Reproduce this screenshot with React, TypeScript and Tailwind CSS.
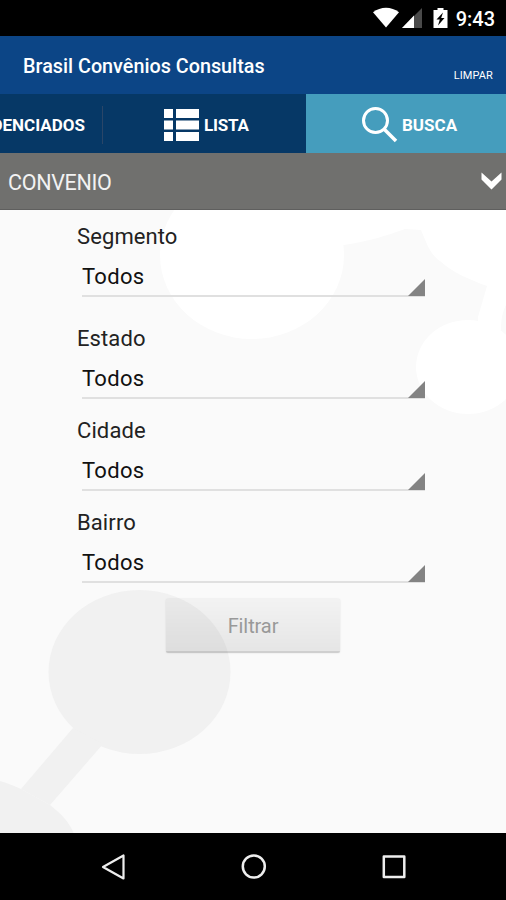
import { useState } from "react";

const fields = [
    { label: "Segmento", className: "mb-7" },
    { label: "Estado", className: "mb-[18px]" },
    { label: "Cidade", className: "mb-[18px]" },
    { label: "Bairro", className: "mb-4" },
];

function StatusBar() {
    return (
        <div className="flex h-9 shrink-0 items-center justify-end bg-black pr-[11px] text-white">
            <svg className="mr-[2px]" width="26" height="22" viewBox="0 0 26 22" fill="#fff">
                <path d="M0 5.200C7.500-.8 18.500-.8 26 5.200L13 20.500z" />
            </svg>
            <svg className="mr-[11px]" width="21" height="22" viewBox="0 0 21 22">
                <path d="M21 1v20H1z" fill="#4a4a4a" />
                <path d="M13 8.600V21H1z" fill="#fff" />
            </svg>
            <svg className="mr-[8px]" width="15" height="22" viewBox="0 0 15 22">
                <path d="M4.500 1h6v2H14.500v18H.500V3h4z" fill="#fff" />
                <path d="M10 5.500 3.500 12.500h3.300L5 18.500 11.500 11H8.200z" fill="#000" />
            </svg>
            <span className="pt-[2px] text-[20px] leading-[34px] font-medium">9:43</span>
        </div>
    );
}

function Tabs({ active, onChange }: { active: string; onChange: (tab: string) => void }) {
    const color = (tab: string) => (active === tab ? "bg-[#459dbd]" : "bg-[#063866]");

    return (
        <div className="flex h-[59px] shrink-0 text-[17px] font-bold text-white">
            <button onClick={() => onChange("credenciados")} className={`flex w-[102px] items-center justify-end overflow-hidden pt-1 pr-[17px] ${color("credenciados")}`}>
                CREDENCIADOS
            </button>
            <button onClick={() => onChange("lista")} className={`flex w-[204px] items-center pt-[3px] ${color("lista")}`}>
                <span className="h-[38px] w-px bg-[#2a4668]"></span>
                <svg className="ml-[61px]" width="36" height="32" viewBox="0 0 36 32" fill="#fff">
                    <path d="M0 0h9v9H0zM12 0h23v9H12zM0 11.500h9v9H0zM12 11.500h23v9H12zM0 23h9v9H0zM12 23h23v9H12z" />
                </svg>
                <span className="ml-1 pt-px tracking-[-0.2px]">LISTA</span>
            </button>
            <button onClick={() => onChange("busca")} className={`flex flex-1 items-center pt-[3px] ${color("busca")}`}>
                <svg className="ml-[56px]" width="36" height="36" viewBox="0 0 36 36" fill="none" stroke="#fff" strokeWidth="3">
                    <circle cx="13.500" cy="13.500" r="12" />
                    <path d="M22 22 34 34" strokeWidth="3.500" />
                </svg>
                <span className="ml-1 pt-px">BUSCA</span>
            </button>
        </div>
    );
}

function Field({ label, className }: { label: string; className: string }) {
    return (
        <div className={`ml-[77px] w-[348px] ${className}`}>
            <div className="h-[26px] text-[22px] leading-[27px] tracking-[0.1px] text-[#222]">{label}</div>
            <button className="ml-[5px] flex h-12 w-[343px] items-end justify-between border-b-2 border-[#e0e0e0] text-left">
                <span className="h-[31px] text-[22px] leading-[26px] tracking-[0.3px] text-[#111]">Todos</span>
                <svg className="-mb-[1px]" width="17" height="17" viewBox="0 0 17 17" fill="#838383">
                    <path d="M17 0v17H0z" />
                </svg>
            </button>
        </div>
    );
}

// molecule artwork behind the form
function Background() {
    return (
        <svg className="absolute inset-0 -z-10" width="506" height="623" viewBox="0 0 506 623">
            <path d="M172 0H506V95C502 103 501 111 501 120L478 125V107L487 76C470 70 452 62 440 51 430 44 427 34 421 20L405 19C385 26 370 31 344 35z" fill="#fff" />
            <ellipse cx="252" cy="45" rx="92" ry="84" fill="#fff" />
            <ellipse cx="468" cy="157" rx="52" ry="47" fill="#fff" />
            <g fill="#f1f1f1">
                <ellipse cx="139.500" cy="462" rx="91" ry="82" />
                <path d="M73 518 21 579 50 595 103 534z" />
                <path d="M0 571C8 573 14 576 21 579L50 595C60 603 69 611 74 624H0z" />
            </g>
        </svg>
    );
}

function NavBar() {
    return (
        <div className="flex h-[67px] shrink-0 items-center justify-between bg-black pr-[99px] pl-[101px]">
            <svg width="26" height="28" viewBox="0 0 26 28" fill="none" stroke="#eee" strokeWidth="2.200" strokeLinejoin="round">
                <path d="M22.500 2.500v23L2 14z" />
            </svg>
            <svg width="26" height="28" viewBox="0 0 26 28" fill="none" stroke="#eee" strokeWidth="2.500">
                <circle cx="12.800" cy="13.500" r="11" />
            </svg>
            <svg width="26" height="28" viewBox="0 0 26 28" fill="none" stroke="#eee" strokeWidth="2.500" strokeLinejoin="round">
                <path d="M2.800 3.500h20.500v20.500h-20.500z" />
            </svg>
        </div>
    );
}

export default function App() {
    const [tab, setTab] = useState("busca");

    return (
        <div className="flex h-[900px] w-[506px] flex-col overflow-hidden bg-[#fafafa] font-['Roboto',sans-serif]">
            <StatusBar />
            <div className="flex h-[58px] shrink-0 items-center justify-between bg-[#0c4586] pr-[13px] pl-[23px] text-white">
                <h1 className="pt-[3px] text-[19.8px] font-medium">Brasil Convênios Consultas</h1>
                <button className="pt-[22px] text-[11px] tracking-[0.1px]">LIMPAR</button>
            </div>
            <Tabs active={tab} onChange={setTab} />
            <div className="flex h-[57px] shrink-0 items-center justify-between border-b border-[#5f5f5e] bg-[#70706e] pr-1 pl-2 text-[#f2f2f2]">
                <span className="pt-[4px] text-[21.5px] tracking-[-0.3px]">CONVENIO</span>
                <svg width="21" height="18" viewBox="0 0 21 18" fill="#fff">
                    <path d="M.500.500 10.500 9.500 20.500.500V7.500L10.500 17.500.500 7.500z" />
                </svg>
            </div>
            <div className="relative isolate flex-1 pt-[13px]">
                <Background />
                {fields.map((field) => (
                    <Field key={field.label} label={field.label} className={field.className} />
                ))}
                <button className="ml-[166px] h-[54px] w-[174px] rounded-[2px] border-b-2 border-black/15 bg-linear-to-b from-black/3 to-black/8 pt-[2px] text-[20px] tracking-[-0.1px] text-[#999] shadow-[0_0_2px_rgba(0,0,0,0.12)]">
                    Filtrar
                </button>
            </div>
            <NavBar />
        </div>
    );
}
